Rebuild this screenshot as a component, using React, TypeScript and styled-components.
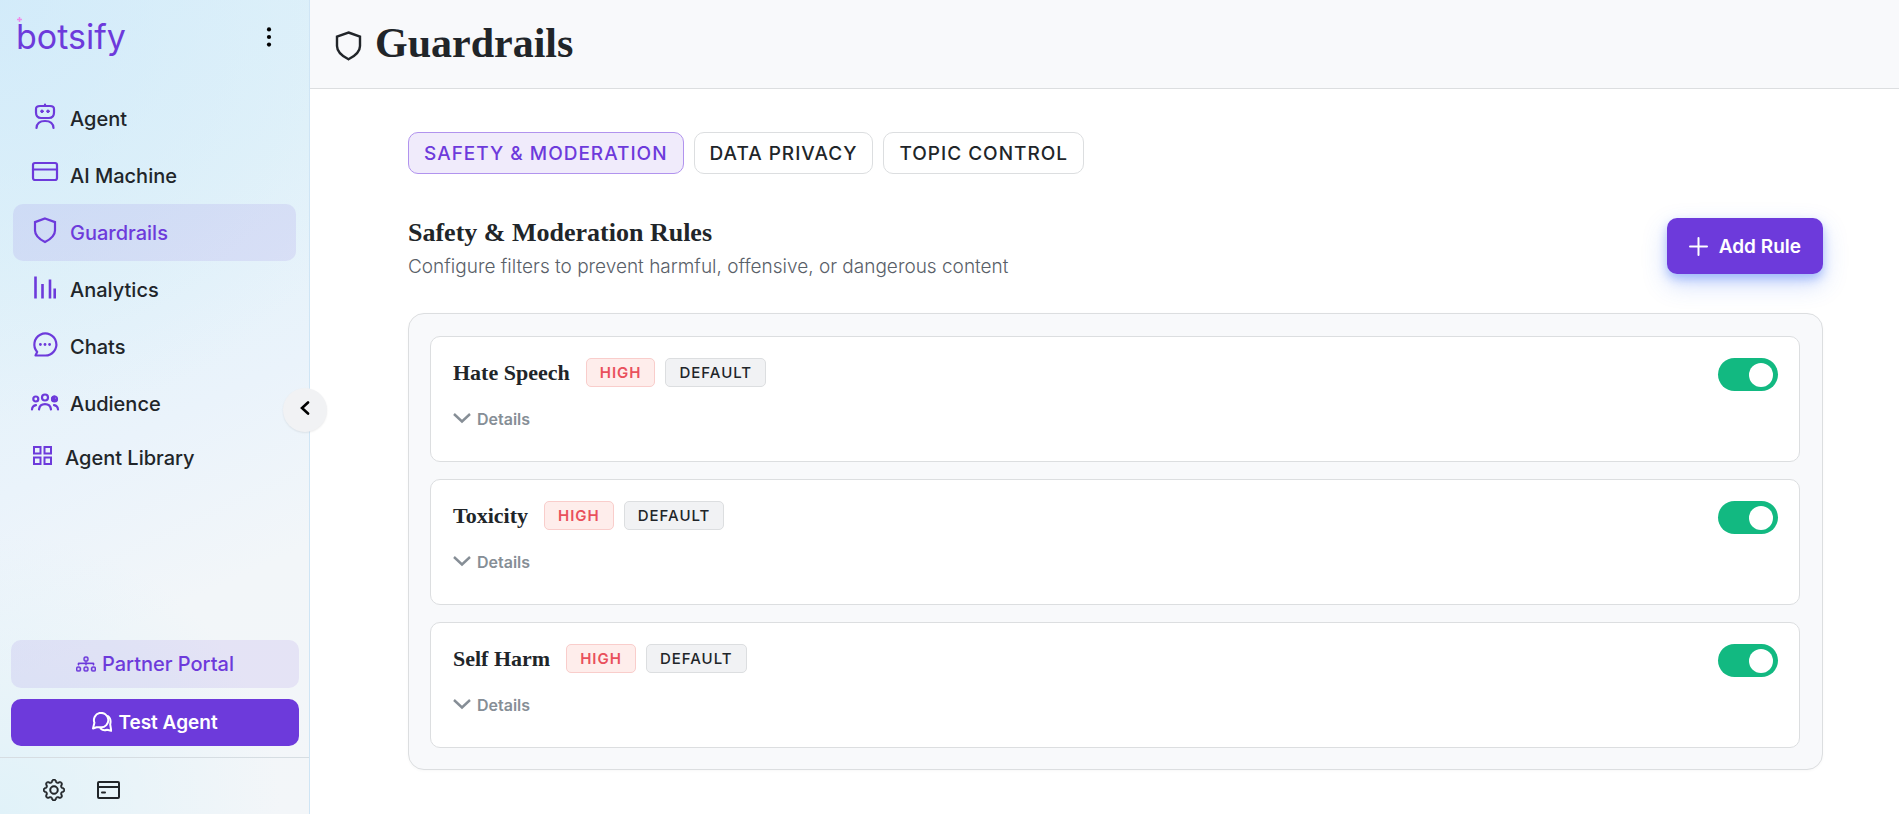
import React, { useState } from "react";
import styled, { createGlobalStyle } from "styled-components";
import { BsDiagram3, BsGear } from "react-icons/bs";

const purple = "#6d3adb";
const ink = "#212529";
const line = "#dcdee0";
const sans = `Inter, "Liberation Sans", sans-serif`;
const serif = `"Liberation Serif", serif`;

const GlobalStyle = createGlobalStyle`
  *, *::before, *::after { box-sizing: border-box; }
  body { margin: 0; background: #fff; color: ${ink}; font-family: ${sans}; }
  button { font-family: inherit; cursor: pointer; }
  h1, h2, h3, p, ul { margin: 0; padding: 0; }
  svg { display: block; flex: none; }
`;

const Shell = styled.div`
  display: grid;
  grid-template-columns: 310px minmax(0, 1fr);
  min-height: 100vh;
`;

const Sidebar = styled.aside`
  position: sticky;
  top: 0;
  height: 100vh;
  display: flex;
  flex-direction: column;
  border-right: 1px solid #cfe5f5;
  background:
    radial-gradient(circle at 0 0, rgba(208, 234, 250, 0.8), rgba(208, 234, 250, 0) 420px),
    radial-gradient(circle at 0 100%, rgba(220, 241, 249, 0.8), rgba(220, 241, 249, 0) 280px),
    linear-gradient(155deg, #ddf0f9 0%, #e2f2f9 28%, #eaf3fb 52%, #f2f6f9 72%, #f3f6f9 100%);
`;

const Brand = styled.div`
  display: flex;
  justify-content: space-between;
  align-items: center;
  height: 74px;
  padding: 0 28px 0 16px;
`;

const Logo = styled.a`
  position: relative;
  color: ${purple};
  font-size: 34px;
  line-height: 40px;
  text-decoration: none;
`;

const Spark = styled.svg`
  position: absolute;
  left: 1px;
  top: 0;
`;

const IconButton = styled.button`
  display: flex;
  align-items: center;
  justify-content: center;
  width: 24px;
  height: 24px;
  padding: 0;
  border: 0;
  background: none;
  color: ${ink};
`;

const MoreButton = styled(IconButton)`
  color: #000;
`;

const NavList = styled.ul`
  list-style: none;
  margin: 16px 13px 0;
`;

const NavLink = styled.a<{ $active?: boolean; $compact?: boolean }>`
  display: flex;
  align-items: center;
  gap: ${(p) => (p.$compact ? 10 : 11)}px;
  height: ${(p) => (p.$compact ? 52 : 57)}px;
  padding: 0 18px;
  border-radius: 10px;
  background: ${(p) => (p.$active ? "rgba(109, 58, 219, 0.1)" : "none")};
  color: ${(p) => (p.$active ? purple : ink)};
  font-size: 20px;
  font-weight: 500;
  line-height: 28px;
  text-decoration: none;

  svg {
    color: ${purple};
    margin-bottom: ${(p) => (p.$compact ? 4 : 6)}px;
  }
`;

const Actions = styled.div`
  display: flex;
  flex-direction: column;
  gap: 11px;
  margin-top: auto;
  padding: 11px 10px 11px 11px;
`;

const ActionButton = styled.button<{ $solid?: boolean }>`
  display: flex;
  align-items: center;
  justify-content: center;
  gap: 6px;
  height: ${(p) => (p.$solid ? 47 : 48)}px;
  border: 0;
  border-radius: 10px;
  background: ${(p) => (p.$solid ? purple : "rgba(109, 58, 219, 0.1)")};
  color: ${(p) => (p.$solid ? "#fff" : purple)};
  font-size: ${(p) => (p.$solid ? 19 : 20)}px;
  font-weight: ${(p) => (p.$solid ? 600 : 500)};
`;

const SidebarFooter = styled.div`
  display: flex;
  align-items: center;
  gap: 30px;
  height: 57px;
  padding: 8px 42px 0;
  border-top: 1px solid #d6dde2;
`;

const CollapseButton = styled.button`
  position: absolute;
  right: -18px;
  top: 388px;
  z-index: 1;
  display: flex;
  align-items: center;
  justify-content: center;
  width: 44px;
  height: 44px;
  padding: 0 0 4px;
  border: 0;
  border-radius: 50%;
  background: #f1f2f4;
  box-shadow: 0 1px 2px rgba(0, 0, 0, 0.08);
  color: #000;
`;

const PageHeader = styled.header`
  display: flex;
  align-items: center;
  gap: 12px;
  height: 89px;
  padding: 0 24px 2px;
  border-bottom: 1px solid ${line};
  background: #f8f9fb;

  svg { margin-top: 6px; }
`;

const PageTitle = styled.h1`
  font: 700 42px/50px ${serif};
`;

const Content = styled.div`
  padding: 43px 76px 44px 98px;
`;

const Tabs = styled.div`
  display: flex;
  gap: 10px;
`;

const Tab = styled.button<{ $active: boolean }>`
  height: 42px;
  padding: 0 15px;
  border: 1px solid ${(p) => (p.$active ? "#b193ee" : line)};
  border-radius: 10px;
  background: ${(p) => (p.$active ? "#f0ebfb" : "#fff")};
  color: ${(p) => (p.$active ? purple : ink)};
  font-size: 19px;
  font-weight: 500;
  letter-spacing: 1px;
  text-transform: uppercase;
`;

const SectionHead = styled.div`
  display: flex;
  justify-content: space-between;
  align-items: flex-start;
  margin: 44px 0 33px;
`;

const SectionTitle = styled.h2`
  font: 700 26px/30px ${serif};
`;

const SectionNote = styled.p`
  margin-top: 5px;
  color: #596068;
  font-size: 19px;
  font-weight: 300;
  line-height: 27px;
`;

const AddButton = styled.button`
  display: flex;
  align-items: center;
  gap: 11px;
  height: 56px;
  padding: 0 22px;
  border: 0;
  border-radius: 10px;
  background: ${purple};
  box-shadow: 0 10px 24px rgba(59, 113, 245, 0.25), 0 5px 10px rgba(59, 113, 245, 0.35);
  color: #fff;
  font-size: 19px;
  font-weight: 600;
`;

const Panel = styled.section`
  display: flex;
  flex-direction: column;
  gap: 17px;
  padding: 22px 22px 21px 21px;
  border: 1px solid ${line};
  border-radius: 16px;
  background: #f8f9fb;
  box-shadow: 0 1px 3px rgba(0, 0, 0, 0.03);
`;

const RuleCard = styled.article`
  display: flex;
  justify-content: space-between;
  align-items: flex-start;
  padding: 21px 21px 30px 22px;
  border: 1px solid ${line};
  border-radius: 10px;
  background: #fff;
`;

const RuleHead = styled.div`
  display: flex;
  align-items: center;
  gap: 10px;
`;

const RuleTitle = styled.h3`
  margin-right: 6px;
  font: 700 22px/28px ${serif};
`;

const Tag = styled.span<{ $danger?: boolean }>`
  height: 29px;
  padding: 0 13px;
  border: 1px solid ${(p) => (p.$danger ? "#f9cdcb" : line)};
  border-radius: 5px;
  background: ${(p) => (p.$danger ? "#feedeb" : "#f1f2f4")};
  color: ${(p) => (p.$danger ? "#e9505c" : ink)};
  font-size: 15px;
  font-weight: ${(p) => (p.$danger ? 600 : 500)};
  line-height: 27px;
  letter-spacing: 1px;
`;

const DetailsButton = styled.button`
  display: flex;
  align-items: center;
  gap: 6px;
  height: 24px;
  margin-top: 20px;
  padding: 0;
  border: 0;
  background: none;
  color: #868e96;
  font-size: 16px;
  font-weight: 600;
`;

const Switch = styled.input`
  appearance: none;
  flex: none;
  width: 60px;
  height: 33px;
  margin: 0;
  padding: 5px;
  border-radius: 17px;
  background: #c6cad0;
  cursor: pointer;

  &::after {
    content: "";
    display: block;
    width: 24px;
    height: 24px;
    border-radius: 50%;
    background: #fff;
  }
  &:checked { background: #12b981; }
  &:checked::after { margin-left: auto; }
`;

const stroke = {
  fill: "none",
  stroke: "currentColor",
  strokeWidth: 2.2,
  strokeLinecap: "round" as const,
  strokeLinejoin: "round" as const,
  "aria-hidden": true,
};

const navIcons = {
  agent: (
    <svg width="28" height="28" viewBox="0 0 28 28" {...stroke}>
      <path d="M14 2.500V4M9 4h10c2.500 0 4 .6 4 3v3.500c0 3.500-1.800 5.500-5 5.500h-8c-3.200 0-5-2-5-5.500V7c0-2.400 1.500-3 4-3z" />
      <path d="M5.500 26c.3-4.600 3.500-7 8.500-7s8.200 2.400 8.500 7" />
      <circle cx="11" cy="9.300" r="1.300" fill="currentColor" strokeWidth="1" />
      <circle cx="17" cy="9.300" r="1.300" fill="currentColor" strokeWidth="1" />
    </svg>
  ),
  machine: (
    <svg width="28" height="28" viewBox="0 0 28 28" {...stroke}>
      <rect x="2" y="4" width="24" height="17" rx="2" />
      <path d="M2 10.500h24" />
    </svg>
  ),
  shield: (
    <svg width="28" height="28" viewBox="0 0 28 28" {...stroke} strokeLinejoin="miter">
      <path d="M14 2.500l10 3.600v8.400c0 5-4 8.500-10 11.600C8 23 4 19.500 4 14.500V6.100z" />
    </svg>
  ),
  analytics: (
    <svg width="28" height="28" viewBox="0 0 28 28" {...stroke} strokeLinecap="butt" strokeWidth={2.6}>
      <path d="M4.500 3.500v22M11.500 11v14.500M19 6.500v19M23.700 15.500v10" />
    </svg>
  ),
  chats: (
    <svg width="28" height="28" viewBox="0 0 28 28" {...stroke}>
      <path d="M14 25.500H4.500l1.700-3.600A11 11 0 1 1 14 25.500z" />
      <g fill="currentColor" stroke="none">
        <circle cx="9.400" cy="14.500" r="1.400" />
        <circle cx="14" cy="14.500" r="1.400" />
        <circle cx="18.600" cy="14.500" r="1.400" />
      </g>
    </svg>
  ),
  audience: (
    <svg width="28" height="28" viewBox="0 0 28 28" overflow="visible" {...stroke}>
      <circle cx="14" cy="10.500" r="3" />
      <circle cx="4.800" cy="12" r="2.500" />
      <circle cx="23.500" cy="12" r="2.500" />
      <path d="M23.500 9.600a2.400 2.400 0 0 0-1.500 4.200l3.500-.8" fill="currentColor" />
      <path d="M8 22.500c.4-3.400 2.800-5.300 6-5.300s5.600 1.900 6 5.300M1 22.500c.2-2.400 1.600-4 4-4.400M27 22.500c-.2-2.400-1.600-4-4-4.400" />
    </svg>
  ),
  library: (
    <svg width="24" height="24" viewBox="0 0 24 24" {...stroke} strokeWidth={2} strokeLinejoin="miter">
      <path d="M3 3h6.500v6.500H3zM13.500 3H20v6.500h-6.500zM3 13.500h6.500V20H3zM13.500 13.500H20V20h-6.500z" />
    </svg>
  ),
};

const navItems: { label: string; icon: keyof typeof navIcons }[] = [
  { label: "Agent", icon: "agent" },
  { label: "AI Machine", icon: "machine" },
  { label: "Guardrails", icon: "shield" },
  { label: "Analytics", icon: "analytics" },
  { label: "Chats", icon: "chats" },
  { label: "Audience", icon: "audience" },
  { label: "Agent Library", icon: "library" },
];

const tabs = ["Safety & Moderation", "Data Privacy", "Topic Control"];
const rules = ["Hate Speech", "Toxicity", "Self Harm"];

function Rule({ name }: { name: string }) {
  const [enabled, setEnabled] = useState(true);
  const id = `rule-${name.toLowerCase().replace(" ", "-")}`;
  return (
    <RuleCard>
      <div>
        <RuleHead>
          <RuleTitle id={id}>{name}</RuleTitle>
          <Tag $danger>HIGH</Tag>
          <Tag>DEFAULT</Tag>
        </RuleHead>
        <DetailsButton type="button" aria-expanded={false}>
          <svg width="18" height="14" viewBox="0 0 18 14" {...stroke} strokeWidth={2.4} strokeLinecap="butt" strokeLinejoin="miter">
            <path d="M1 2l8 7.500L17 2" />
          </svg>
          Details
        </DetailsButton>
      </div>
      <Switch
        type="checkbox"
        role="switch"
        aria-labelledby={id}
        checked={enabled}
        onChange={(e) => setEnabled(e.target.checked)}
      />
    </RuleCard>
  );
}

export default function App() {
  const [activeTab, setActiveTab] = useState(tabs[0]);
  return (
    <>
      <GlobalStyle />
      <Shell>
        <Sidebar>
          <Brand>
            <Logo href="#">
              <Spark width="5" height="5" viewBox="0 0 5 5" stroke="#f08bea" strokeWidth="1.500" aria-hidden>
                <path d="M2.500 0v5M0 2.500h5" />
              </Spark>
              botsify
            </Logo>
            <MoreButton type="button" aria-label="More options">
              <svg width="6" height="20" viewBox="0 0 6 20" fill="currentColor" aria-hidden>
                <circle cx="3" cy="2.400" r="2.100" />
                <circle cx="3" cy="10" r="2.100" />
                <circle cx="3" cy="17.600" r="2.100" />
              </svg>
            </MoreButton>
          </Brand>
          <nav aria-label="Main">
            <NavList>
              {navItems.map(({ label, icon }) => (
                <li key={label}>
                  <NavLink href="#" $active={label === "Guardrails"} $compact={icon === "library"}>
                    {navIcons[icon]}
                    {label}
                  </NavLink>
                </li>
              ))}
            </NavList>
          </nav>
          <Actions>
            <ActionButton type="button">
              <BsDiagram3 size={20} strokeWidth={0.3} aria-hidden />
              Partner Portal
            </ActionButton>
            <ActionButton type="button" $solid>
              <svg width="20" height="22" viewBox="0 0 20 22" {...stroke} strokeWidth={2}>
                <path d="M1 16.500l1.400-5.800A7.200 7.200 0 1 1 8.800 15.300H4.600z" />
                <path d="M15.800 4c2.400 1.700 3.300 4.600 2.400 8.300l1 6.400-4.200-.9c-2.600.9-4.800.3-6.400-1.300" />
              </svg>
              Test Agent
            </ActionButton>
          </Actions>
          <SidebarFooter>
            <IconButton type="button" aria-label="Settings">
              <BsGear size={22} strokeWidth={0.4} aria-hidden />
            </IconButton>
            <IconButton type="button" aria-label="Billing">
              <svg width="24" height="20" viewBox="0 0 24 20" {...stroke} strokeWidth={2}>
                <rect x="2" y="2" width="21" height="16" rx="1" />
                <path d="M2 7h21M6 12.500h3" />
              </svg>
            </IconButton>
          </SidebarFooter>
          <CollapseButton type="button" aria-label="Collapse sidebar">
            <svg width="10" height="14" viewBox="0 0 10 14" {...stroke} strokeWidth={2.6} strokeLinejoin="miter">
              <path d="M8 1.500L2 7l6 5.500" />
            </svg>
          </CollapseButton>
        </Sidebar>
        <main>
          <PageHeader>
            <svg width="29" height="32" viewBox="0 0 29 32" {...stroke} strokeWidth={2.4} strokeLinejoin="miter">
              <path d="M14.500 2.500L26 6.600v9.400c0 5.800-4.500 9.800-11.500 13.300C7.500 25.800 3 21.800 3 16V6.600z" />
            </svg>
            <PageTitle>Guardrails</PageTitle>
          </PageHeader>
          <Content>
            <Tabs role="tablist">
              {tabs.map((tab) => (
                <Tab
                  key={tab}
                  type="button"
                  role="tab"
                  aria-selected={tab === activeTab}
                  $active={tab === activeTab}
                  onClick={() => setActiveTab(tab)}
                >
                  {tab}
                </Tab>
              ))}
            </Tabs>
            <SectionHead>
              <div>
                <SectionTitle>Safety &amp; Moderation Rules</SectionTitle>
                <SectionNote>Configure filters to prevent harmful, offensive, or dangerous content</SectionNote>
              </div>
              <AddButton type="button">
                <svg width="19" height="19" viewBox="0 0 19 19" {...stroke} strokeWidth={2}>
                  <path d="M9.500 1v17M1 9.500h17" />
                </svg>
                Add Rule
              </AddButton>
            </SectionHead>
            <Panel>
              {rules.map((name) => (
                <Rule key={name} name={name} />
              ))}
            </Panel>
          </Content>
        </main>
      </Shell>
    </>
  );
}
